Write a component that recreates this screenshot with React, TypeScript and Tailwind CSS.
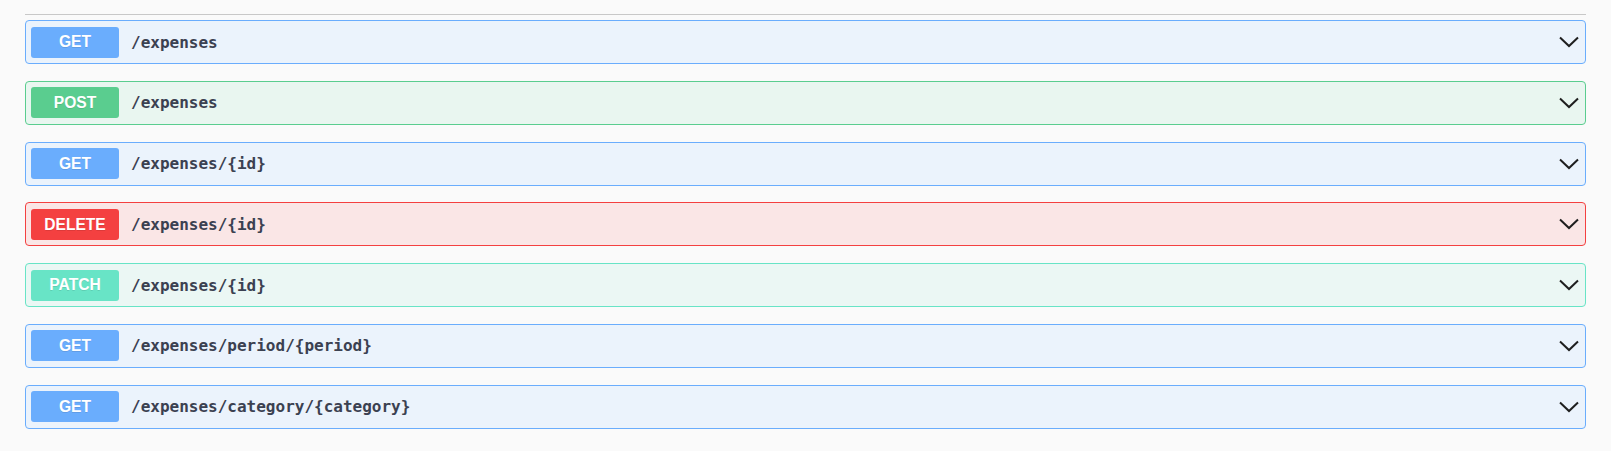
import { ReactNode } from "react"

type Method = "GET" | "POST" | "DELETE" | "PATCH"

const styles: Record<Method, { block: string; badge: string }> = {
  GET: { block: "border-[#6aadfd] bg-[#ebf3fc]", badge: "bg-[#6aadfd]" },
  POST: { block: "border-[#5acd8f] bg-[#e9f6f0]", badge: "bg-[#5acd8f]" },
  DELETE: { block: "border-[#f44040] bg-[#fae6e6]", badge: "bg-[#f44040]" },
  PATCH: { block: "border-[#68e4c6] bg-[#ebf7f4]", badge: "bg-[#68e4c6]" },
}

const endpoints: { method: Method; path: string }[] = [
  { method: "GET", path: "/expenses" },
  { method: "POST", path: "/expenses" },
  { method: "GET", path: "/expenses/{id}" },
  { method: "DELETE", path: "/expenses/{id}" },
  { method: "PATCH", path: "/expenses/{id}" },
  { method: "GET", path: "/expenses/period/{period}" },
  { method: "GET", path: "/expenses/category/{category}" },
]

function Chevron() {
  return (
    <svg width="20" height="12" viewBox="0 0 20 12" className="shrink-0">
      <path d="M1 1.5 L10 10 L19 1.5" fill="none" stroke="#1f1f1f" strokeWidth="2" />
    </svg>
  )
}

function OpBlock({ method, path }: { method: Method; path: string }): ReactNode {
  const s = styles[method]
  return (
    <div className={`flex h-[44px] items-center rounded-[4px] border px-[5px] ${s.block}`}>
      <span
        className={`flex h-[31px] w-[88px] shrink-0 items-center justify-center rounded-[3px] text-[15.6px] font-bold text-white ${s.badge}`}
        style={{ fontFamily: '"Liberation Sans", Arial, sans-serif', textShadow: "0 1px 0 rgba(0,0,0,0.1)" }}
      >
        {method}
      </span>
      <span
        className="ml-[12px] flex-1 pt-px text-[16px] font-bold text-[#3b4151]"
        style={{ fontFamily: '"DejaVu Sans Mono", monospace' }}
      >
        {path}
      </span>
      <span className="mr-[1px]">
        <Chevron />
      </span>
    </div>
  )
}

export default function App() {
  return (
    <div className="min-h-[451px] bg-[#fafafa] pt-[14px] pl-[25px] pr-[25px]">
      <div className="h-px bg-[#c8c8c8]" />
      <div className="mt-[5px] flex flex-col gap-[16.8px]">
        {endpoints.map((e, i) => (
          <OpBlock key={i} method={e.method} path={e.path} />
        ))}
      </div>
    </div>
  )
}
